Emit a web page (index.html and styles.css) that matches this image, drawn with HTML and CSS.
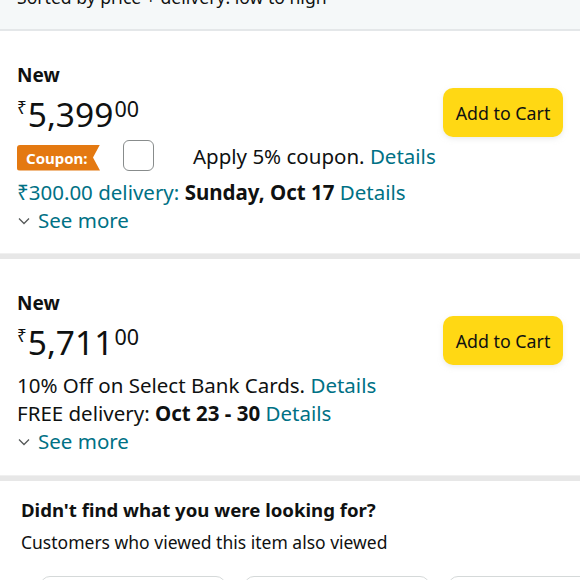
FILE: index.html
```html
<!DOCTYPE html>
<html lang="en">
<head>
<meta charset="utf-8">
<title>Offers</title>
<link rel="stylesheet" href="styles.css">
</head>
<body>
<div class="page">
  <div class="sortbar"><div class="sorttext">Sorted by price + delivery: low to high</div></div>

  <section class="offer offer-first">
    <div class="offer-info">
      <div class="cond">New</div>
      <div class="price"><span class="sym">₹</span><span class="whole">5,399</span><span class="frac">00</span></div>
      <div class="coupon-row">
        <span class="badge">Coupon:</span>
        <span class="check"></span>
        <span class="coupon-text">Apply 5% coupon. <a class="link">Details</a></span>
      </div>
      <div class="line delivery"><span class="link">₹300.00 delivery:</span> <b>Sunday, Oct 17</b> <a class="link">Details</a></div>
      <div class="line seemore"><svg class="chev" width="12" height="8" viewBox="0 0 12 8"><path d="M1 1.5 L6 6.5 L11 1.5" fill="none" stroke="#565959" stroke-width="1.3"/></svg><span class="link">See more</span></div>
    </div>
    <div class="offer-action"><button class="cart">Add to Cart</button></div>
  </section>

  <div class="sep"></div>

  <section class="offer offer-second">
    <div class="offer-info">
      <div class="cond">New</div>
      <div class="price"><span class="sym">₹</span><span class="whole">5,711</span><span class="frac">00</span></div>
      <div class="line first-line">10% Off on Select Bank Cards. <a class="link">Details</a></div>
      <div class="line">FREE delivery: <b>Oct 23 - 30</b> <a class="link">Details</a></div>
      <div class="line seemore"><svg class="chev" width="12" height="8" viewBox="0 0 12 8"><path d="M1 1.5 L6 6.5 L11 1.5" fill="none" stroke="#565959" stroke-width="1.3"/></svg><span class="link">See more</span></div>
    </div>
    <div class="offer-action"><button class="cart">Add to Cart</button></div>
  </section>

  <div class="sep"></div>

  <section class="related">
    <h2 class="related-title">Didn't find what you were looking for?</h2>
    <div class="related-sub">Customers who viewed this item also viewed</div>
    <div class="cards">
      <div class="card"></div>
      <div class="card"></div>
      <div class="card"></div>
    </div>
  </section>
</div>
</body>
</html>
```

FILE: styles.css
```css
html, body {
  margin: 0;
  padding: 0;
  background: #ffffff;
}
body {
  font-family: "Noto Sans", "Open Sans", sans-serif;
  color: #0f1111;
  font-size: 20.5px;
}
.page {
  width: 580px;
  height: 580px;
  overflow: hidden;
}
.sortbar {
  height: 29px;
  background: #f5f8f9;
  border-bottom: 2px solid #e4e7e9;
  overflow: hidden;
  padding-left: 17px;
}
.sorttext {
  font-size: 17.6px;
  line-height: 20px;
  margin-top: -13px;
  white-space: nowrap;
}
.offer {
  display: flex;
  justify-content: space-between;
  padding: 30px 17px 0 17px;
}
.offer-first {
  height: 192px;
}
.offer-second {
  height: 186px;
}
.offer-info {
  display: flex;
  flex-direction: column;
}
.cond {
  font-weight: 700;
  font-size: 19px;
  line-height: 28px;
}
.price {
  margin-top: 6px;
  line-height: 38px;
  display: flex;
  align-items: flex-start;
}
.sym {
  font-size: 17px;
  line-height: 20px;
  margin-top: 3px;
  margin-right: 1px;
}
.whole {
  font-size: 33.5px;
  line-height: 38px;
}
.frac {
  font-size: 21.5px;
  line-height: 20px;
  margin-top: 4px;
  margin-left: 1px;
}
.coupon-row {
  display: flex;
  align-items: center;
  height: 31px;
  margin-top: 7px;
}
.badge {
  background: #e47911;
  color: #ffffff;
  font-weight: 700;
  font-size: 15px;
  line-height: 26px;
  height: 26px;
  width: 83px;
  box-sizing: border-box;
  padding-left: 9px;
  border-radius: 3px 0 0 3px;
  margin-top: 4px;
  clip-path: polygon(0 0, 100% 0, calc(100% - 7px) 50%, 100% 100%, 0 100%);
}
.check {
  width: 29px;
  height: 29px;
  border: 1.5px solid #888c8c;
  border-radius: 6px;
  margin-left: 23px;
}
.coupon-text {
  margin-left: 39px;
  line-height: 28px;
  white-space: nowrap;
}
.link {
  color: #007185;
  text-decoration: none;
}
.line {
  line-height: 28px;
  white-space: nowrap;
}
.delivery {
  margin-top: 7px;
}
.first-line {
  margin-top: 10px;
}
.seemore {
  display: flex;
  align-items: center;
}
.chev {
  margin-left: 1px;
  margin-right: 8px;
  margin-top: 2px;
}
.offer-action {
  padding-top: 27px;
}
.cart {
  width: 120px;
  height: 49px;
  border: none;
  border-radius: 10px;
  background: #ffd814;
  color: #0f1111;
  font-family: "Noto Sans", "Open Sans", sans-serif;
  font-size: 17.8px;
  padding: 0;
  box-shadow: 0 2px 5px rgba(213, 217, 217, 0.5);
}
.sep {
  height: 6px;
  background: #e7e7e7;
  border-top: 1px solid #f0f0f0;
  box-sizing: border-box;
}
.related {
  padding: 15px 21px 0 21px;
}
.related-title {
  margin: 0;
  font-size: 18.6px;
  font-weight: 700;
  line-height: 28px;
}
.related-sub {
  margin-top: 4px;
  font-size: 17.5px;
  line-height: 28px;
}
.cards {
  display: flex;
  gap: 18px;
  margin-top: 20px;
  padding-left: 19px;
}
.card {
  flex: none;
  width: 184px;
  height: 100px;
  border: 1.5px solid #d5d9d9;
  border-radius: 10px;
}
```
